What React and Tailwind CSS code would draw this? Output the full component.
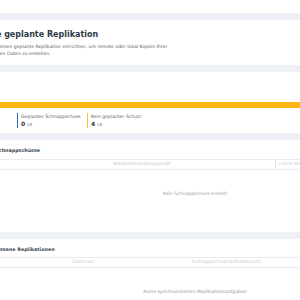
export default function App() {
  return (
    <div className="w-[300px] h-[300px] overflow-hidden bg-[#eef2f6] font-['DejaVu_Sans',Verdana,sans-serif]">
      <div className="-ml-[40px] w-[470px] flex flex-col gap-[7px]">
        {/* bottom of the page header card */}
        <div className="h-[13px] bg-white" />

        {/* Empty state card */}
        <div className="bg-white px-[16px] pt-[10px] pb-[8px] h-[45px]">
          <h1 className="text-[8px] leading-[10px] font-bold text-[#2e3b47]">
            Keine geplante Replikation
          </h1>
          <p className="mt-[3px] ml-[11px] text-[4.6px] leading-[7px] text-[#56606a]">
            Sie können geplante Replikation einrichten, um remote oder lokal Kopien Ihrer
            <br />
            eigenen Daten zu erstellen.
          </p>
        </div>

        {/* Usage card */}
        <div className="bg-white px-[16px] pt-[30px] h-[61px]">
          <div className="h-[6px] bg-[#fbb614]" />
          <div className="mt-[5px] pl-[41px] flex text-[4.6px] leading-[7px]">
            <div className="w-[70px] border-l border-[#2a6fb8] pl-[3px]">
              <div className="text-[#56606a]">Geplanter Schnappschuss</div>
              <div className="text-[#2e3b47]">
                <span className="text-[6px] font-bold">0</span>
                <span className="ml-[2px] text-[4px] text-[#7b858f]">kB</span>
              </div>
            </div>
            <div className="w-[90px] border-l border-[#f2c230] pl-[3px]">
              <div className="text-[#56606a]">Kein geplanter Schutz</div>
              <div className="text-[#2e3b47]">
                <span className="text-[6px] font-bold">4</span>
                <span className="ml-[2px] text-[4px] text-[#7b858f]">kB</span>
              </div>
            </div>
          </div>
        </div>

        {/* Snapshots card */}
        <div className="bg-white px-[16px] pt-[7px] h-[92px]">
          <h2 className="text-[4.8px] leading-[7px] font-bold text-[#3a4650]">Lokale Schnappschüsse</h2>
          <div className="mt-[5px] h-[11px] border-y border-[#e9edf1] flex items-center text-[4.6px] text-[#c3c9cf]">
            <div className="w-[132px] pl-[4px]">Name</div>
            <div className="w-[167px] pl-[5px]">Wiederherstellungspunkt</div>
            <div className="h-full flex items-center border-l border-[#e3e7eb] pl-[3px]">Letzte Kopie</div>
          </div>
          <div className="mt-[20px] text-center text-[4.6px] leading-[7px] text-[#98a1aa]">
            Kein Schnappschuss erstellt
          </div>
        </div>

        {/* Replications card */}
        <div className="bg-white px-[16px] pt-[7px] h-[70px]">
          <h2 className="-ml-[4px] text-[4.8px] leading-[7px] font-bold text-[#3a4650]">Abgeschlossene Replikationen</h2>
          <div className="mt-[4px] h-[11px] border-y border-[#e9edf1] flex items-center text-[4.6px] text-[#c3c9cf]">
            <div className="w-[92px] pl-[4px]">Name</div>
            <div className="w-[120px] pl-[4px]">Zielserver</div>
            <div className="pl-[4px]">Schnappschuss-Aufnahmezeit</div>
          </div>
          <div className="mt-[20px] text-center text-[4.6px] leading-[7px] text-[#8e98a2]">
            Keine synchronisierten Replikationsaufgaben
          </div>
        </div>
      </div>
    </div>
  );
}
